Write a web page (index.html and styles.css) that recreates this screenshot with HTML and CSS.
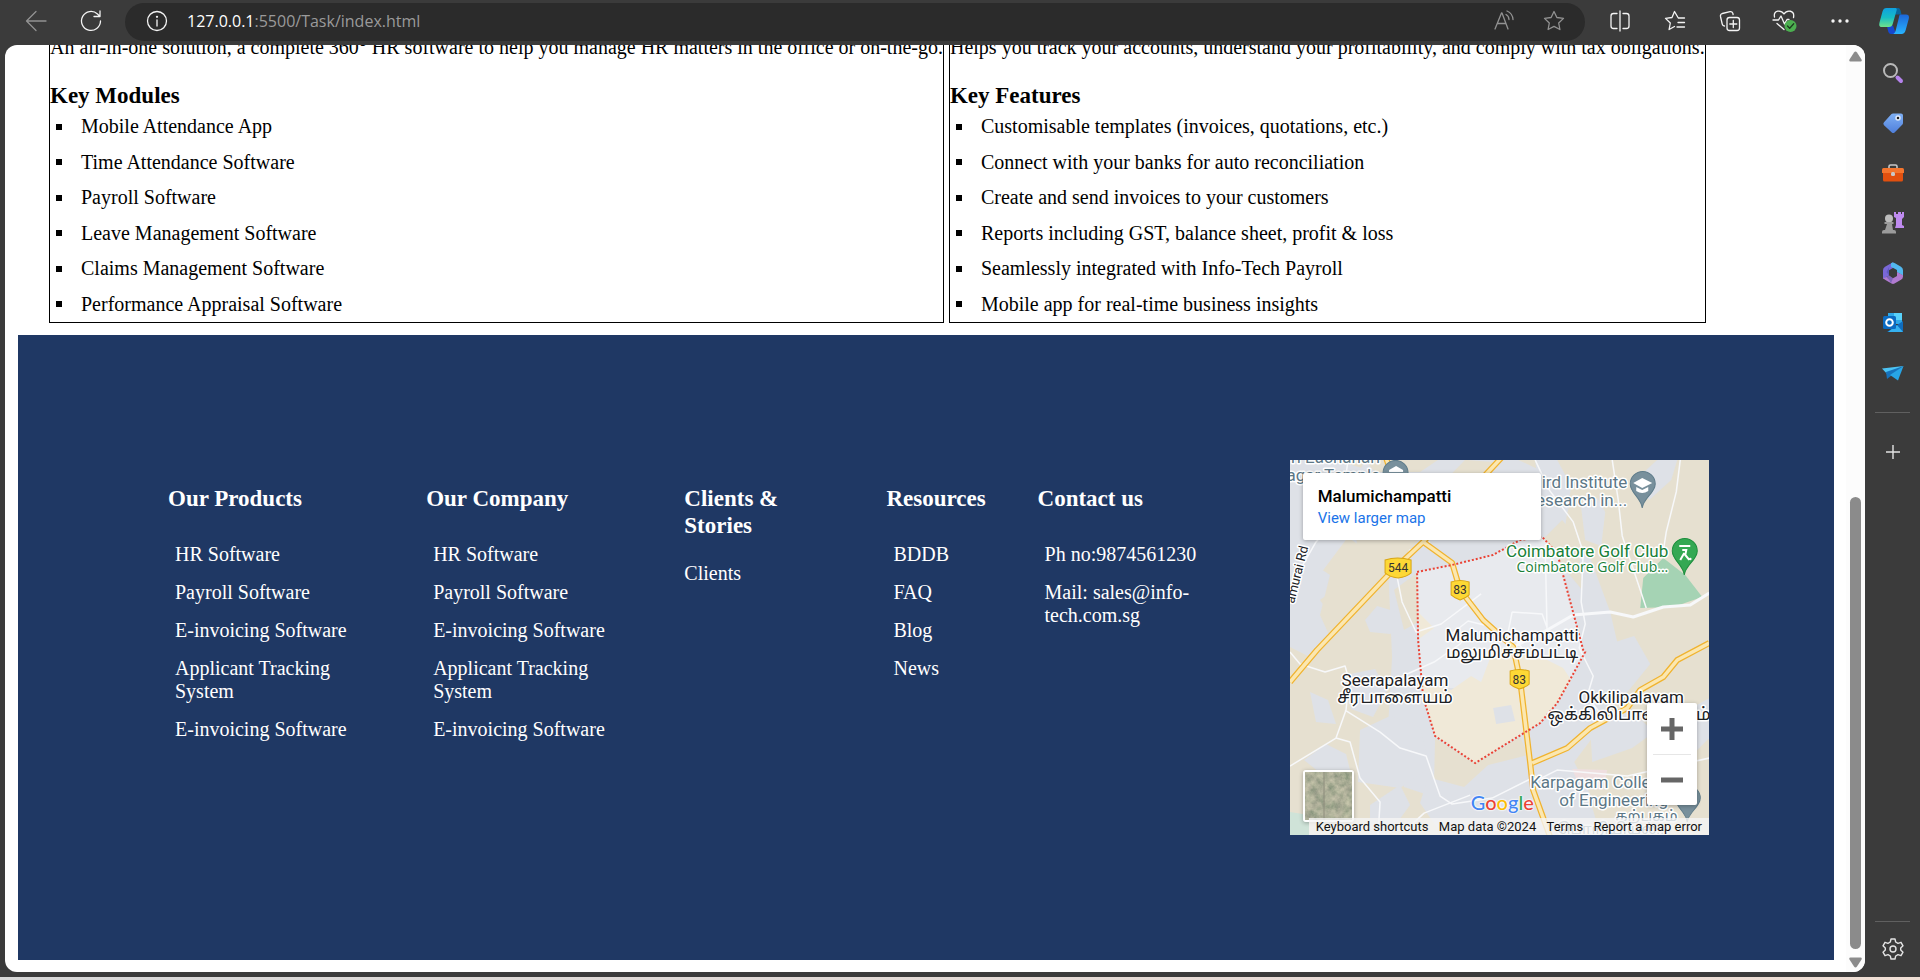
FILE: index.html
```html
<!DOCTYPE html>
<html lang="en">
<head>
<meta charset="utf-8">
<title>Info-Tech</title>
<link rel="stylesheet" href="styles.css">
</head>
<body>
<header class="toolbar">
  <button class="tool dim" aria-label="Back"><svg width="22" height="22" viewBox="0 0 22 22"><path d="M21 11H2M11 1.500L1.500 11l9.500 9.500"/></svg></button>
  <button class="tool" aria-label="Refresh"><svg width="22" height="22" viewBox="0 0 22 22"><path d="M20.500 11a9.500 9.500 0 1 1-3-7l2 2M20 1v5.500h-6"/></svg></button>
  <div class="address">
    <button class="plain" aria-label="Site information"><svg width="22" height="22" viewBox="0 0 22 22"><circle cx="11" cy="11" r="9.500"/><path d="M11 10v6"/><circle cx="11" cy="6.800" r=".5"/></svg></button>
    <div class="url"><span class="host">127.0.0.1</span>:5500/Task/index.html</div>
    <button class="plain dim" aria-label="Read aloud"><svg width="22" height="22" viewBox="0 0 22 22"><path d="M2 19L8.500 3h.5L15 19M4.500 13.500h8M13 4.500a6 6 0 0 1 3 5M14 1a10 10 0 0 1 6 8.500"/></svg></button>
    <button class="plain dim" aria-label="Add to favorites"><svg width="22" height="22" viewBox="0 0 22 22"><path d="M11 1.500l2.900 6 6.600.9-4.800 4.600 1.200 6.500-5.900-3.100-5.900 3.100L6.300 13 1.500 8.400l6.600-.9z"/></svg></button>
  </div>
  <button class="tool" aria-label="Split screen"><svg width="22" height="22" viewBox="0 0 22 22"><path d="M11 1v20M8 3.500H4.500a2.500 2.500 0 0 0-2.500 2.500v10a2.500 2.500 0 0 0 2.500 2.500H8M14 3.500h3.500a2.500 2.500 0 0 1 2.500 2.500v10a2.500 2.500 0 0 1-2.500 2.500H14"/></svg></button>
  <button class="tool" aria-label="Favorites"><svg width="22" height="22" viewBox="0 0 22 22"><path d="M20.500 8h-6.200L10.500 1.500 8 7.500l-6.500.9L6.300 13l-1.200 6.500 5.400-3M14 12.500h6.500M13 17h7.500"/></svg></button>
  <button class="tool" aria-label="Collections"><svg width="22" height="22" viewBox="0 0 22 22"><rect x="8" y="7.500" width="12.500" height="13" rx="2.500"/><path d="M14.300 10.500v7M10.800 14h7M5.500 16c-1.500 0-2-.8-2.300-2L1.500 6.500c-.3-1.500.3-2.500 1.800-3L11 1.600c1.500-.3 2.300.3 2.800 1.600l.3 1.300"/></svg></button>
  <button class="tool" aria-label="Browser essentials"><svg width="26" height="24" viewBox="0 0 26 24"><path d="M2.500 8C1 1 9 .5 12 5c3-4.500 11-4 9.500 3.500M1 11h5.500l2.500-4 3.500 8 2.500-4.500h2M5 14.500l7 6"/><circle class="ok" cx="18.500" cy="17" r="6"/><path class="tick" d="M15.500 17l2.200 2.200 4-4.400"/></svg></button>
  <button class="tool" aria-label="Settings and more"><svg width="22" height="22" viewBox="0 0 22 22"><g class="solid"><circle cx="4" cy="11" r="1.700"/><circle cx="11" cy="11" r="1.700"/><circle cx="18" cy="11" r="1.700"/></g></svg></button>
  <button class="tool copilot" aria-label="Copilot"><svg width="30" height="28" viewBox="0 0 30 28"><defs><linearGradient id="c1" x1="0" y1="0" x2="0" y2="1"><stop offset="0" stop-color="#0fa0e0"/><stop offset=".5" stop-color="#16bdc5"/><stop offset="1" stop-color="#6fe28a"/></linearGradient><linearGradient id="c2" x1="0" y1="0" x2="0" y2="1"><stop offset="0" stop-color="#1c66d8"/><stop offset="1" stop-color="#28b4ff"/></linearGradient></defs><path fill="#08659c" stroke="none" d="M14 1h5c2 0 2.500 2 3.500 6.500h-8z"/><path fill="#1647cf" stroke="none" d="M8 19l6-.5 3 8.500h-5c-3 0-3-4-4-8z"/><path fill="url(#c1)" stroke="none" d="M7.500 1h9c1 0 1.500 1 1.200 2L14 16c-.8 3-2 4-4 4H3c-3 0-3-2-2.500-4.500l3-11C4.200 2 5.500 1 7.500 1z"/><path fill="url(#c2)" stroke="none" d="M21.500 7.500H27c3 0 3.300 2 2.700 4.500l-3 11c-.7 2.500-2 4-4.200 4h-9c2 0 2.700-2 3.300-4l3-12c.5-2 .5-3.500 1.700-3.500z"/></svg></button>
</header>

<div class="workspace">
  <div class="viewport">
    <main class="page">
      <section class="cards">
        <article class="card">
          <p>An all-in-one solution, a complete 360° HR software to help you manage HR matters in the office or on-the-go.</p>
          <h3>Key Modules</h3>
          <ul><li>Mobile Attendance App</li><li>Time Attendance Software</li><li>Payroll Software</li><li>Leave Management Software</li><li>Claims Management Software</li><li>Performance Appraisal Software</li></ul>
        </article>
        <article class="card">
          <p>Helps you track your accounts, understand your profitability, and comply with tax obligations.</p>
          <h3>Key Features</h3>
          <ul><li>Customisable templates (invoices, quotations, etc.)</li><li>Connect with your banks for auto reconciliation</li><li>Create and send invoices to your customers</li><li>Reports including GST, balance sheet, profit &amp; loss</li><li>Seamlessly integrated with Info-Tech Payroll</li><li>Mobile app for real-time business insights</li></ul>
        </article>
      </section>

      <footer class="footer">
        <section class="col"><h3>Our Products</h3>
          <ul><li><a href="#">HR Software</a></li><li><a href="#">Payroll Software</a></li><li><a href="#">E-invoicing Software</a></li><li><a href="#">Applicant Tracking System</a></li><li><a href="#">E-invoicing Software</a></li></ul></section>
        <section class="col"><h3>Our Company</h3>
          <ul><li><a href="#">HR Software</a></li><li><a href="#">Payroll Software</a></li><li><a href="#">E-invoicing Software</a></li><li><a href="#">Applicant Tracking System</a></li><li><a href="#">E-invoicing Software</a></li></ul></section>
        <section class="col"><h3>Clients &amp; Stories</h3><p><a href="#">Clients</a></p></section>
        <section class="col"><h3>Resources</h3>
          <ul><li><a href="#">BDDB</a></li><li><a href="#">FAQ</a></li><li><a href="#">Blog</a></li><li><a href="#">News</a></li></ul></section>
        <section class="col"><h3>Contact us</h3>
          <ul><li>Ph no:9874561230</li><li>Mail: sales@info-tech.com.sg</li></ul></section>

        <section class="map" aria-label="Map of Malumichampatti">
          <svg class="tiles" viewBox="0 0 419 375" preserveAspectRatio="xMidYMid slice">
            <rect width="419" height="375" fill="#e6e0d0"/>
            <g fill="#dee1e7">
              <path d="M0 0h45l40 12h45l18-12h80l30 14 22 30-12 34 32 20 20 54 14 60-20 50-30 40 20 40-40 10-30 35h-40l-20-40-60-20-16-60 4-70-4-90-40-30-30 40-34 20L0 150z"/>
              <path d="M245 0h22l14 26-6 40-24-10z"/>
              <path d="M291 48l16-10 8 14-4 34-16-6z"/>
              <path d="M75 160l12-14 20 6 15-6-2 16-20 12-20-2z"/>
              <path d="M0 130l25-25 15 10-10 40 10 22-20 20-20-10z"/>
              <path d="M20 232l18 8 8 24-20-2z"/>
              <path d="M55 215l30-6 12 22-14 26-22-8z"/>
              <path d="M14 300l22-16 20 10 5 20-22 6z"/>
              <path d="M70 270l30-14 30 12 10 40-30 20-42-6z"/>
              <path d="M75 0l18 22-14 30 10 22-40-20z"/>
              <path d="M140 310l36 12 50-40 50 8 10 40-20 45H152l-22-32z"/>
              <path d="M300 268l40-18 24 22-22 16-40 14z"/>
              <path d="M300 190l44-14 16 28-26 32-30-6z"/>
              <path d="M383 258l36-20v40l-20 20z"/>
              <path d="M345 20l22-20h20l-6 20-22 20z"/>
              <path d="M270 330l30 10 10 35h-50z"/>
              <path d="M80 345l30-20 10 20-22 30H80z"/>
            </g>
            <g fill="#e6e0d0">
              <path d="M175 0l28 2-35 42-30-6z"/>
              <path d="M66 70l40-12 24 20-42 48-20-14z"/>
              <path d="M104 130l24-18v50l-14 8z"/>
              <path d="M30 140l30-22 18 12-30 36z"/>
              <path d="M145 278l40 25 45-26 8 18-40 10-24 22-30-8z"/>
              <path d="M252 80l20-20 16 20 4 50-20-24z"/>
            </g>
            <path fill="#e8eaee" d="M127 112l35-7 41-10 27-15 22-3 15 16 26 97 2 2-18 36H131z"/>
            <path fill="#f0e9d8" d="M131 222l30 8 20-14 10 6 12-32 30-2 40 20 8 12-14 23-17 20-65 40-40-27-12-39z"/>
            <path fill="#dee1e7" d="M203 248l18-3 4 16-19 3z"/>
            <path fill="#f0e9d8" d="M128 152l16 16-14 10z"/>
            <path fill="#efdfe0" d="M282 309l35 1-4 20-24-4z"/>
            <path fill="#a5d3b4" d="M373 98l22 17 17 22-29 10-33 1 3-30z"/>
            <path fill="#cfe3d8" d="M0 352l19 3v20H0z"/>
            <g class="lane">
              <path d="M0 192l10 12 25 8 20-6 4 14 40 2 45-20 26-18 13-16"/>
              <path d="M59 220l-3 30-10 28-46 28M55 250l35 22 20 16 26 8 14 40 12 8 40-6 44-22"/>
              <path d="M46 278l14 4 10 36 20 24-2 33"/>
              <path d="M10 110l16-28 14-16 14-36 4-30M140 82l-20 8-14 22 6 30 14 30 25-8 40-30"/>
              <path d="M245 0l14 30 24 32 10 30-2 50 4 22-6 24 14 28-6 20 12 16"/>
              <path d="M322 0l6 40 4 36 24 72"/>
              <path d="M390 0l-4 32-10 40-4 26M255 85l2 90M222 152l30 2 5 14M222 152l-4 20 14 16"/>
              <path d="M160 175l18-14 16 4"/>
              <path d="M243 322l24-12 70 6 82-18M110 375l24-22 46-18"/>
            </g>
            <path class="lane wide" d="M419 133l-19 12-27 2-30 10-23-5-37 3-26 15-34 17"/>
            <path class="highway" d="M0 222l27-32 73-77 33-31 80-86M133 82l29 21 8 27 23 30 30 27 7 33 10 83 3 27 17 47M419 183l-32 17-14 17-23 13-13 18-37 20-23 20-35 15M95-5l6 18"/>
            <path class="highway-core" d="M0 222l27-32 73-77 33-31 80-86M133 82l29 21 8 27 23 30 30 27 7 33 10 83 3 27 17 47M419 183l-32 17-14 17-23 13-13 18-37 20-23 20-35 15M95-5l6 18"/>
            <path class="district" d="M127 112l35-7 41-10 27-15 22-3 15 16 26 97 2 2-28 51-17 20-65 40-40-27-12-39-5-57z"/>
            <g class="shield">
              <path d="M95 100q12-4 26 0v13q-4 4-13 5-9-1-13-5z"/><path d="M161 122q9-3 18 0v13q-3 3-9 5-6-2-9-5z"/><path d="M220 211q9-3 19 0v13q-3 3-10 5-6-2-9-5z"/>
              <text x="108" y="112">544</text><text x="170" y="134">83</text><text x="229" y="224">83</text>
            </g>
            <g class="pin"><path d="M352 48c-1-10-12-15-12-24a12.500 12.500 0 0 1 25 0c0 9-12 14-13 24z"/><path d="M106 26c-10 0-13-8-13-13a12.500 12.500 0 0 1 25 0z"/><path d="M397 362c-1-10-12-15-12-24a12.500 12.500 0 0 1 25 0c0 9-12 14-13 24z"/></g>
            <path fill="#34a853" stroke="#1e8e3e" d="M394 115c-1-10-12-15-12-24a12.500 12.500 0 0 1 25 0c0 9-12 14-13 24z"/>
            <path fill="#fff" d="M343 23l9-5 10 5-10 5zM346 27l6 3 6-3v4q-6 4-12 0zM99 12h14v-2l-7-4-7 4z"/>
            <path fill="none" stroke="#fff" stroke-width="2" d="M389 86h11M392 90h4l-1 5 4 5M394 93l-4 7"/><circle cx="400" cy="99" r="1.300" fill="#fff"/>
            <g class="place">
              <text x="222" y="181" font-size="17" text-anchor="middle">Malumichampatti</text>
              <text x="222" y="198" font-size="17" text-anchor="middle">மலுமிச்சம்பட்டி</text>
              <text x="105" y="226" font-size="17" text-anchor="middle">Seerapalayam</text>
              <text x="105" y="243" font-size="17" text-anchor="middle">சீரபாளையம்</text>
              <text x="341" y="243" font-size="17" text-anchor="middle">Okkilipalayam</text>
              <text x="257" y="260" font-size="17">ஒக்கிலிபாளையம்</text>
            </g>
            <g class="place poi">
              <text x="90" y="3" text-anchor="end">ri Eachanari</text><text x="90" y="21" text-anchor="end">nagar Temple</text>
              <text x="337" y="28" text-anchor="end">ird Institute</text><text x="337" y="46" text-anchor="end">esearch in...</text>
              <text x="240" y="328">Karpagam College</text><text x="269" y="346">of Engineering</text>
              <text x="325" y="361" font-size="15">கற்பகம்</text><text x="378" y="374" font-size="15" text-anchor="end">பொறியியல்...</text>
            </g>
            <g class="place golf"><text x="378" y="97" font-size="17" text-anchor="end">Coimbatore Golf Club</text><text x="378" y="112" font-size="14" text-anchor="end" font-family="Open Sans">Coimbatore Golf Club...</text></g>
            <text class="place" font-size="13" transform="translate(4 144) rotate(-76)">amurai Rd</text>
          </svg>
          <div class="place-card"><strong>Malumichampatti</strong><a href="#">View larger map</a></div>
          <button class="satellite" aria-label="Show satellite imagery"><svg width="47" height="48" viewBox="0 0 47 48"><filter id="terrain" x="0" y="0" width="1" height="1"><feTurbulence type="fractalNoise" baseFrequency=".13" numOctaves="4" seed="7"/><feColorMatrix values=".55 0 0 0 .13  .45 .05 0 0 .17  .35 0 0 0 .13  0 0 0 0 1"/></filter><rect width="47" height="48" filter="url(#terrain)"/><path d="M19 0v48" stroke="#8d8c7c" fill="none"/></svg></button>
          <div class="zoom"><button aria-label="Zoom in"><svg width="22" height="22" viewBox="0 0 22 22"><path d="M11 0v22M0 11h22"/></svg></button><button aria-label="Zoom out"><svg width="22" height="22" viewBox="0 0 22 22"><path d="M0 11h22"/></svg></button></div>
          <div class="google"><span class="b">G</span><span class="r">o</span><span class="y">o</span><span class="b">g</span><span class="g">l</span><span class="r">e</span></div>
          <div class="legal"><button>Keyboard shortcuts</button><span>Map data ©2024</span><a href="#">Terms</a><a href="#">Report a map error</a></div>
        </section>
      </footer>
    </main>
    <div class="scrollbar"><svg width="13" height="11" viewBox="0 0 13 11"><path d="M5 1.500q1.500-2 3 0l4.500 7q.8 2-1 2h-10q-1.800 0-1-2z"/></svg><div class="track"><div class="thumb"></div></div><svg width="13" height="11" viewBox="0 0 13 11"><path d="M5 9.500q1.500 2 3 0l4.500-7q.8-2-1-2h-10q-1.800 0-1 2z"/></svg></div>
  </div>

  <nav class="rail" aria-label="Sidebar">
    <button aria-label="Search"><svg width="22" height="22" viewBox="0 0 22 22"><circle cx="8.500" cy="8.500" r="6.500" fill="none" stroke="#b9b9b9" stroke-width="2"/><path d="M15.500 15.500l3.500 3.500" stroke="#b583ec" stroke-width="4" stroke-linecap="round"/></svg></button>
    <button aria-label="Shopping"><svg width="22" height="22" viewBox="0 0 22 22"><defs><linearGradient id="tg" x2="0" y2="1"><stop stop-color="#7fb0f5"/><stop offset="1" stop-color="#4f7fdb"/></linearGradient></defs><path fill="url(#tg)" d="M11 1.500h8q2 0 2 2V11q0 1-.8 1.800l-7.600 7.600q-1.500 1.200-2.800 0L2 13.300q-1.400-1.500 0-3L9.500 2q.6-.5 1.500-.5z"/><circle cx="16" cy="6" r="2" fill="#222" stroke="#dfe9fb" stroke-width="1.500"/></svg></button>
    <button aria-label="Tools"><svg width="22" height="22" viewBox="0 0 22 22"><path fill="none" stroke="#c8c8c8" stroke-width="1.600" d="M7 7V4.500Q7 3 8.500 3h5Q15 3 15 4.500V7"/><path fill="#e2500f" d="M1 10h20v8q0 1.500-1.500 1.500h-17Q1 19.500 1 18z"/><path fill="#f4752e" d="M0 7.500Q0 6 1.500 6h19Q22 6 22 7.500V11H0z"/><rect x="9" y="10" width="4" height="4" rx="1.500" fill="#c9c9c9"/></svg></button>
    <button aria-label="Games"><svg width="22" height="22" viewBox="0 0 22 22"><path fill="#bf8bf0" d="M12 0h2v2h2V0h3v2h1V0h2v5l-2 2v6l2 1v2h-9l1-3V6l-2-1z"/><circle cx="7" cy="6.500" r="4" fill="#bdbdbd"/><path fill="#9b9b9b" d="M2.500 10h9v2H10l1 6H3l2-6H2.500zM0 20q0-2 2-2h10q2 0 2 2v1.500H0z"/></svg></button>
    <button aria-label="Microsoft 365"><svg width="22" height="22" viewBox="0 0 22 22"><path fill="#7a68d8" d="M11 .3L3 4.800Q1 6 1 8.200V17l6-3.500V8.300l6-3.500z"/><path fill="#52b8ef" d="M9 1.300q1.800-1.600 4 0l6 3.500q2 1.200 2 3.400v5.300l-6-3.300V8L9 4.800z"/><path fill="#b17bd0" d="M1 13.500v1.800q0 1.400 2 2.500l6.500 3.700q1.500.8 3 0l6.500-3.700q2-1.200 2-3.400v-1.200l-6-3.300V14l-4 2.300-4-2.800-6 3z"/><path fill="#34479c" d="M9 1.300L7 4.800v8.700l4 2.800-2 5-2-3.500-3-3 3-1.300L4.500 10z" opacity=".4"/></svg></button>
    <button aria-label="Outlook"><svg width="22" height="22" viewBox="0 0 22 22"><path fill="#2fa8e8" d="M6 1h14v11H6z"/><path fill="#58d2fb" d="M12 1h8v7h-8z"/><path fill="#0f6cbd" d="M5 20L21 9v11z"/><path fill="#35b1f0" d="M6 20l9-7 6 7z"/><rect x="1" y="4" width="13" height="13" rx="1.500" fill="#0b6bc2"/><circle cx="7.500" cy="10.500" r="3.300" fill="none" stroke="#fff" stroke-width="2"/></svg></button>
    <button aria-label="Drop"><svg width="22" height="22" viewBox="0 0 22 22"><path fill="#4cc4f5" d="M0 6.500L21.500 4 6 13z"/><path fill="#1673bd" d="M4 10L21.500 4 5 17z"/><path fill="#27a5e6" d="M8 13l13.500-9L16 18.500z"/></svg></button>
    <hr>
    <button class="line" aria-label="Customize"><svg width="22" height="22" viewBox="0 0 22 22"><path d="M11 4v14M4 11h14"/></svg></button>
    <hr class="last">
    <button class="line" aria-label="Settings"><svg width="22" height="22" viewBox="0 0 22 22"><circle cx="11" cy="11" r="3"/><path d="M9 1h4l.7 3 2.300 1.300 3-1 2 3.500L18.700 10v2l2.300 2.200-2 3.500-3-1-2.300 1.300-.7 3H9l-.7-3L6 16.700l-3 1-2-3.500L3.300 12v-2L1 7.800l2-3.500 3 1L8.300 4z"/></svg></button>
  </nav>
</div>
<div class="desktop-edge"></div>
</body>
</html>
```

FILE: styles.css
```css
* { box-sizing: border-box; }
body { margin: 0; height: 100vh; display: flex; flex-direction: column; overflow: hidden; background: #3b3b3b; color: #000; font: 20px/23px "Liberation Serif", "Times New Roman", serif; }
button { margin: 0; padding: 0; border: 0; background: none; color: inherit; font: inherit; }
ul, p, h3 { margin: 0; padding: 0; }
h3 { font-size: 23px; line-height: 27px; }
svg { display: block; }

.toolbar { flex: none; height: 45px; padding: 0 0 3px 8px; display: flex; align-items: center; }
.toolbar svg { fill: none; stroke: #f4f4f4; stroke-width: 1.3; stroke-linecap: round; stroke-linejoin: round; }
.toolbar .dim svg { stroke: #929292; }
.toolbar .solid { fill: #f4f4f4; stroke: none; }
.toolbar .ok { fill: #4caf50; stroke: none; }
.toolbar .tick { stroke: #1d3b1e; }
.tool { width: 55px; display: flex; justify-content: center; }
.copilot { width: 53px; }
.address { flex: 1; min-width: 0; height: 38px; margin: 2px 7px 0; padding: 0 20px 2px 21px; display: flex; align-items: center; gap: 28px; border-radius: 19px; background: #2b2b2b; }
.url { flex: 1; margin-left: -9px; color: #9a9a9a; font: 16px/24px "Open Sans", "Segoe UI", sans-serif; white-space: nowrap; }
.host { color: #fff; }

.workspace { flex: 1; min-height: 0; display: flex; padding: 0 0 0 5px; }
.viewport { flex: 1; min-width: 0; margin-bottom: 5px; display: flex; border-radius: 12px; background: #fff; overflow: hidden; }
.page { flex: 1; min-width: 0; padding: 0 12px 0 13px; }
.cards { margin: -9px 0 12px 31px; display: flex; gap: 5px; white-space: nowrap; }
.card { border: 1px solid #000; border-top: 0; padding-bottom: 6px; }
.card h3 { margin: 23px 0 6px; }
.card ul { height: 201px; display: flex; flex-direction: column; justify-content: space-between; padding-left: 6px; list-style: none; }
.card li { display: flex; align-items: center; gap: 19px; }
.card li::before { content: ""; width: 6px; height: 6px; background: #000; }

.footer { padding: 125px 125px 125px 150px; display: grid; grid-template-columns: 258fr 258fr 202fr 151fr 252fr 419fr; background: #1f3864; color: #fff; }
.footer a { color: inherit; text-decoration: none; }
.col { padding: 25px 50px 0 0; }
.col h3 { margin-bottom: 23px; }
.col ul { display: flex; flex-direction: column; gap: 15px; padding: 8px 0 0 7px; list-style: none; }

.map { position: relative; height: 375px; overflow: hidden; font-family: Roboto, sans-serif; }
.tiles { width: 100%; height: 100%; font-family: Roboto, "Noto Sans Tamil", sans-serif; }
.lane { fill: none; stroke: #f7f8fa; stroke-width: 1.5; stroke-linejoin: round; }
.wide { stroke-width: 3; }
.highway { fill: none; stroke: #f0b32f; stroke-width: 6; stroke-linejoin: round; }
.highway-core { fill: none; stroke: #fbe7b0; stroke-width: 3.5; stroke-linejoin: round; }
.district { fill: none; stroke: #ea4335; stroke-width: 2; stroke-dasharray: 2 2; }
.shield path { fill: #fdd835; stroke: #d9a514; }
.shield text { font-size: 12px; text-anchor: middle; fill: #333; }
.pin { fill: #78909c; stroke: #607d8b; }
.place { fill: #202124; stroke: #fff; stroke-width: 3px; stroke-linejoin: round; paint-order: stroke; }
.poi { fill: #5c7786; font-size: 17px; }
.golf { fill: #188038; }
.place-card { position: absolute; left: 13px; top: 13px; width: 238px; height: 67px; padding: 12px 15px; display: flex; flex-direction: column; border-radius: 2px; background: #fff; box-shadow: 0 1px 4px rgba(0, 0, 0, .3); font-size: 15px; line-height: 22px; }
.place-card strong { color: #000; font-size: 17px; font-weight: 500; }
.footer .place-card a { color: #1a73e8; }
.satellite { position: absolute; left: 13px; bottom: 13px; border: 2px solid #fff; border-radius: 3px; box-shadow: 0 1px 4px rgba(0, 0, 0, .3); }
.zoom { position: absolute; right: 12px; bottom: 30px; width: 50px; padding: 0 6px; display: flex; flex-direction: column; border-radius: 2px; background: #fff; box-shadow: 0 1px 4px rgba(0, 0, 0, .3); }
.zoom button { height: 51px; display: flex; align-items: center; justify-content: center; }
.zoom button + button { border-top: 1px solid #e6e6e6; }
.zoom path { fill: none; stroke: #666; stroke-width: 5; }
.google { position: absolute; left: 181px; bottom: 21px; font: 500 20px/24px Lato, sans-serif; text-shadow: 0 0 2px #fff, 0 0 2px #fff, 0 0 2px #fff; }
.b { color: #4285f4; } .r { color: #ea4335; } .y { color: #fbbc05; } .g { color: #34a853; }
.legal { position: absolute; left: 19px; right: 0; bottom: 0; height: 17px; padding: 0 7px; display: flex; justify-content: space-between; background: rgba(245, 245, 245, .8); color: #111; font-size: 13px; line-height: 17px; white-space: nowrap; }

.scrollbar { width: 19px; padding: 6px 0 4px; display: flex; flex-direction: column; align-items: center; background: #fcfcfc; }
.scrollbar svg { fill: #8b8b8b; }
.track { flex: 1; padding-bottom: 8px; display: flex; flex-direction: column; justify-content: flex-end; }
.thumb { width: 11px; height: 51%; border-radius: 6px; background: #8b8b8b; }

.rail { width: 55px; padding: 3px 0; display: flex; flex-direction: column; align-items: center; }
.rail button { width: 55px; height: 50px; display: flex; align-items: center; justify-content: center; }
.rail hr { width: 35px; margin: 14px 0; border: 0; border-top: 1px solid #606060; }
.rail .last { margin: auto 0 2px; }
.line svg { fill: none; stroke: #e4e4e4; stroke-width: 1.4; stroke-linejoin: round; }
.desktop-edge { flex: none; height: 3px; background: linear-gradient(90deg, #d8d8d8, #eadcd6 70%, #f0dfd5); }
```
